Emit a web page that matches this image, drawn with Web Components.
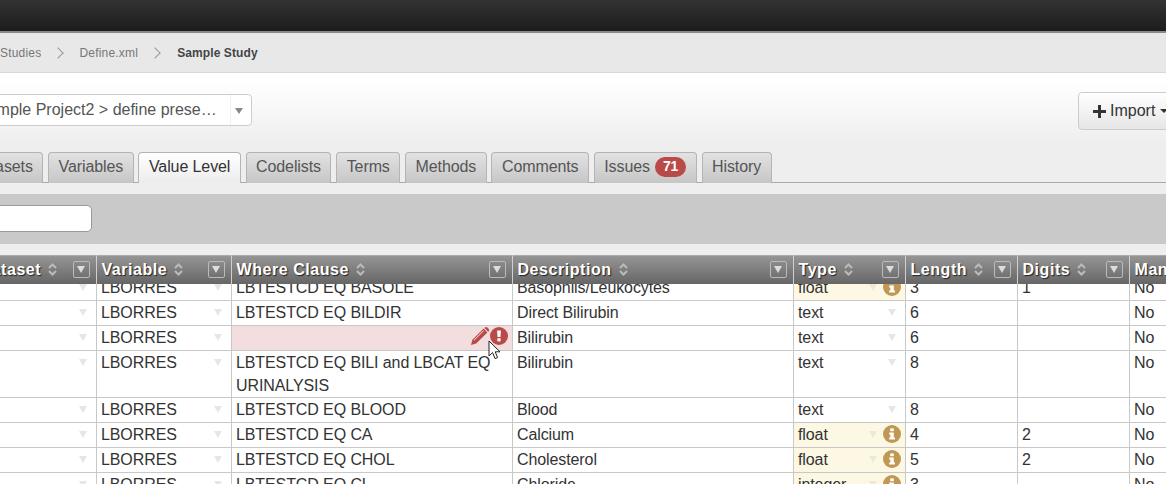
<!DOCTYPE html>
<html>
<head>
<meta charset="utf-8">
<title>Sample Study</title>
<style>
  html, body { margin: 0; height: 484px; overflow: hidden; background: #eee; }
  body { font-family: "Liberation Sans", Arial, sans-serif; font-size: 16px; color: #333; }
</style>
</head>
<body>
<app-topbar></app-topbar>
<app-breadcrumb>
  <span>Studies</span>
  <span>Define.xml</span>
  <span class="current">Sample Study</span>
</app-breadcrumb>
<study-panel>
  <project-select slot="left">Sample Project2 &gt; define prese…</project-select>
  <import-button slot="right"></import-button>
</study-panel>
<tab-bar>
  <tab-item>Datasets</tab-item>
  <tab-item>Variables</tab-item>
  <tab-item active>Value Level</tab-item>
  <tab-item>Codelists</tab-item>
  <tab-item>Terms</tab-item>
  <tab-item>Methods</tab-item>
  <tab-item>Comments</tab-item>
  <tab-item badge="71">Issues</tab-item>
  <tab-item>History</tab-item>
</tab-bar>
<filter-bar></filter-bar>
<value-grid></value-grid>

<script>
class AppTopbar extends HTMLElement {
  constructor() {
    super();
    this.attachShadow({ mode: 'open' }).innerHTML = `
      <style>
        :host {
          display: block;
          height: 31px;
          background: linear-gradient(#333, #1c1c1c);
          border-bottom: 2px solid #8a8a8a;
        }
      </style>`;
  }
}

class AppBreadcrumb extends HTMLElement {
  constructor() {
    super();
    this.attachShadow({ mode: 'open' }).innerHTML = `
      <style>
        :host {
          display: flex;
          align-items: center;
          height: 39px;
          background: #e8e8e8;
          border-bottom: 1px solid #d8d8d8;
          font-size: 12px;
          letter-spacing: .2px;
          color: #777;
        }
        ::slotted(span) { display: flex; align-items: center; }
        ::slotted(span:not(:last-child))::after {
          content: "";
          width: 7px;
          height: 7px;
          margin: 0 17px 0 13px;
          border-top: 1.5px solid #999;
          border-right: 1.5px solid #999;
          transform: rotate(45deg);
        }
        ::slotted(.current) { margin-left: 1px; font-weight: 700; color: #444; letter-spacing: .1px; }
      </style>
      <slot></slot>`;
  }
}

class StudyPanel extends HTMLElement {
  constructor() {
    super();
    this.attachShadow({ mode: 'open' }).innerHTML = `
      <style>
        :host {
          display: flex;
          justify-content: space-between;
          align-items: flex-start;
          height: 60px;
          padding-top: 19px;
          background: linear-gradient(#fff 10%, #eee 90%);
        }
      </style>
      <slot name="left"></slot>
      <slot name="right"></slot>`;
  }
}

class ProjectSelect extends HTMLElement {
  constructor() {
    super();
    this.attachShadow({ mode: 'open' }).innerHTML = `
      <style>
        :host {
          display: flex;
          align-items: center;
          box-sizing: border-box;
          width: 288px;
          height: 32px;
          margin: 2px 0 0 -36px;
          padding-left: 12px;
          background: #fff;
          border: 1px solid #ccc;
          border-radius: 4px;
          color: #555;
        }
        .label { flex: 1; white-space: nowrap; overflow: hidden; }
        .arrow {
          box-sizing: border-box;
          width: 21px;
          height: 100%;
          padding-right: 4px;
          display: flex;
          align-items: center;
          justify-content: center;
          border-left: 1px solid #f2f2f2;
        }
        .arrow::before {
          content: "";
          margin-top: 2px;
          border-top: 6px solid #888;
          border-left: 4px solid transparent;
          border-right: 4px solid transparent;
        }
      </style>
      <span class="label"><slot></slot></span>
      <span class="arrow"></span>`;
  }
}

class ImportButton extends HTMLElement {
  constructor() {
    super();
    this.attachShadow({ mode: 'open' }).innerHTML = `
      <style>
        :host {
          display: flex;
          align-items: center;
          gap: 4px;
          box-sizing: border-box;
          width: 100px;
          height: 38px;
          margin-right: -12px;
          padding-left: 14px;
          background: linear-gradient(#fff, #e6e6e6);
          border: 1px solid #ccc;
          border-radius: 4px;
          color: #333;
        }
        svg { display: block; }
        .caret {
          margin-left: 1px;
          border-top: 4px solid #333;
          border-left: 4px solid transparent;
          border-right: 4px solid transparent;
        }
      </style>
      <svg width="13" height="13" viewBox="0 0 13 13"><path fill="#333" d="M5 0h3v5h5v3H8v5H5V8H0V5h5z"/></svg>
      <span>Import</span>
      <span class="caret"></span>`;
  }
}

class TabBar extends HTMLElement {
  constructor() {
    super();
    this.attachShadow({ mode: 'open' }).innerHTML = `
      <style>
        :host {
          display: flex;
          gap: 4.75px;
          height: 30px;
          margin-left: -40px;
          border-bottom: 1px solid #aaa;
        }
      </style>
      <slot></slot>`;
  }
}

class TabItem extends HTMLElement {
  constructor() {
    super();
    const badge = this.getAttribute('badge');
    this.attachShadow({ mode: 'open' }).innerHTML = `
      <style>
        :host {
          display: flex;
          align-items: center;
          gap: 5px;
          box-sizing: border-box;
          height: 31px;
          padding: 0 9.5px 2px;
          background: linear-gradient(#e2e2e2, #c6c6c6);
          border: 1px solid #b4b4b4;
          border-bottom: 0;
          border-radius: 4px 4px 0 0;
          letter-spacing: -.1px;
          color: #555;
        }
        :host([active]) {
          background: linear-gradient(#fff, #ececec);
          color: #333;
          z-index: 1;
        }
        .badge {
          padding: 1px 8px 2px;
          border-radius: 10px;
          background: #b94a48;
          color: #fff;
          font-size: 14px;
          font-weight: 700;
          line-height: 17px;
        }
      </style>
      <slot></slot>${badge ? `<span class="badge">${badge}</span>` : ''}`;
  }
}

class FilterBar extends HTMLElement {
  constructor() {
    super();
    this.attachShadow({ mode: 'open' }).innerHTML = `
      <style>
        :host {
          display: block;
          height: 50px;
          margin-top: 11px;
          padding-top: 11px;
          box-sizing: border-box;
          background: #c9c9c9;
        }
        .search {
          box-sizing: border-box;
          width: 140px;
          height: 27px;
          margin-left: -48px;
          background: #fff;
          border: 1px solid #999;
          border-radius: 5px;
        }
      </style>
      <div class="search"></div>`;
  }
}

const COLUMNS = [
  { title: 'Dataset', width: 122, caret: true },
  { title: 'Variable', width: 135, caret: true },
  { title: 'Where Clause', width: 281 },
  { title: 'Description', width: 281 },
  { title: 'Type', width: 112, caret: true },
  { title: 'Length', width: 112 },
  { title: 'Digits', width: 112 },
  { title: 'Mandatory', width: 112 },
];

const ROWS = [
  ['LB', 'LBORRES', 'LBTESTCD EQ BASOLE', 'Basophils/Leukocytes', 'float', '3', '1', 'No'],
  ['LB', 'LBORRES', 'LBTESTCD EQ BILDIR', 'Direct Bilirubin', 'text', '6', '', 'No'],
  ['LB', 'LBORRES', '', 'Bilirubin', 'text', '6', '', 'No'],
  ['LB', 'LBORRES', 'LBTESTCD EQ BILI and LBCAT EQ URINALYSIS', 'Bilirubin', 'text', '8', '', 'No'],
  ['LB', 'LBORRES', 'LBTESTCD EQ BLOOD', 'Blood', 'text', '8', '', 'No'],
  ['LB', 'LBORRES', 'LBTESTCD EQ CA', 'Calcium', 'float', '4', '2', 'No'],
  ['LB', 'LBORRES', 'LBTESTCD EQ CHOL', 'Cholesterol', 'float', '5', '2', 'No'],
  ['LB', 'LBORRES', 'LBTESTCD EQ CL', 'Chloride', 'integer', '3', '', 'No'],
];

const INFO_ICON = `<svg class="icon info" width="18" height="18" viewBox="0 0 18 18">
  <circle cx="9" cy="9" r="9" fill="#c09853"/>
  <rect x="7.2" y="3.4" width="3.6" height="2.8" fill="#fff"/>
  <path fill="#fff" d="M6.2 7.4h4.6v5.2h1.2v2H6.2v-2h1.2V9.4H6.2z"/>
</svg>`;

const ERROR_ICON = `<svg class="icon error" width="18" height="18" viewBox="0 0 18 18">
  <circle cx="9" cy="9" r="9" fill="#b94a48"/>
  <path fill="#fff" d="M7 3.4h4l-.6 6.6H7.6z"/>
  <rect x="7.4" y="11.2" width="3.2" height="3.2" fill="#fff"/>
</svg>`;

const PENCIL_ICON = `<svg class="icon pencil" width="19" height="18" viewBox="0 0 19 18">
  <path fill="#b94a48" d="M0 18l1.4-5.2L12.6 1.6l3.8 3.8L5.2 16.6z"/>
  <path fill="#b94a48" d="M13.8.6c.8-.8 1.8-.8 2.6 0l1.2 1.2c.8.8.8 1.8 0 2.6l-.4.4-3.8-3.8z"/>
  <path fill="#f2dede" d="M2.6 13l9.6-9.6.6.6-9.6 9.6z"/>
</svg>`;

class ValueGrid extends HTMLElement {
  constructor() {
    super();
    const cols = COLUMNS.map(c => `<col style="width:${c.width}px">`).join('');
    const head = COLUMNS.map(c => `
      <th>
        <span class="title">${c.title}</span>
        <svg class="sort" width="9" height="13" viewBox="0 0 9 13"><path fill="none" stroke="#bbb" stroke-width="2" d="M1 5l3.5-3.5L8 5M1 8l3.5 3.5L8 8"/></svg>
        <span class="filter"></span>
      </th>`).join('');
    const body = ROWS.map(row => `<tr${row[2].includes('URINALYSIS') ? ' class="tall"' : ''}>${row.map((text, i) => this.cell(text, i)).join('')}</tr>`).join('');

    this.attachShadow({ mode: 'open' }).innerHTML = `
      <style>
        :host {
          display: block;
          position: relative;
          margin: 11px 0 0 -25px;
          height: 229px;
          overflow: hidden;
          background: #fff;
        }
        table {
          table-layout: fixed;
          width: 1267px;
          border-collapse: separate;
          border-spacing: 0;
        }
        .head { position: relative; z-index: 1; }
        .scroll { margin-top: -8px; }
        th {
          position: relative;
          height: 29px;
          padding: 0 0 0 4.5px;
          box-sizing: border-box;
          text-align: left;
          white-space: nowrap;
          background: linear-gradient(#959595, #666);
          border-top: 1px solid #aaa;
          border-right: 1px solid #d0d0d0;
          color: #fff;
          font-weight: 700;
          letter-spacing: .55px;
          text-shadow: 1px 1px 1px #222;
        }
        th .sort { vertical-align: -1px; margin-left: 2px; }
        .filter {
          position: absolute;
          right: 6px;
          top: 5px;
          box-sizing: border-box;
          width: 17px;
          height: 17px;
          border: 1px solid #bbb;
          border-radius: 2px;
        }
        .filter::after {
          content: "";
          position: absolute;
          left: 3px;
          top: 4px;
          border-top: 7px solid #ddd;
          border-left: 4.5px solid transparent;
          border-right: 4.5px solid transparent;
        }
        td {
          position: relative;
          box-sizing: border-box;
          height: 25px;
          padding: 0 4px;
          vertical-align: top;
          line-height: 23px;
          letter-spacing: -.1px;
          border-right: 1px solid #c8c8c8;
          border-bottom: 1px solid #c8c8c8;
        }
        tr.tall td { height: 47px; }
        td.warn { background: #fcf8e3; }
        td.bad { background: #f2dede; }
        .caret {
          position: absolute;
          right: 9px;
          top: 8px;
          border-top: 7px solid #e6e6e6;
          border-left: 4px solid transparent;
          border-right: 4px solid transparent;
        }
        td.warn .caret { right: 28px; border-top-color: #ece9d8; }
        .icon { position: absolute; }
        .info { right: 4px; top: 2px; }
        .error { right: 4px; top: 1px; }
        .pencil { right: 22px; top: 1px; }
        .cursor { position: absolute; left: 513px; top: 85px; z-index: 2; }
      </style>
      <table class="head"><colgroup>${cols}</colgroup><tr>${head}</tr></table>
      <div class="scroll"><table><colgroup>${cols}</colgroup>${body}</table></div>
      <svg class="cursor" width="14" height="21" viewBox="0 0 14 21">
        <path fill="#fff" stroke="#222" d="M1 1v15l3.6-3.4 2.4 6 2.6-1-2.4-5.8H12z"/>
      </svg>`;
  }

  cell(text, index) {
    const { caret } = COLUMNS[index];
    const isFloat = text === 'float' || text === 'integer';
    const classes = [];
    let extra = caret ? '<span class="caret"></span>' : '';
    if (index === 4 && isFloat) {
      classes.push('warn');
      extra += INFO_ICON;
    }
    if (index === 2 && text === '') {
      classes.push('bad');
      extra += PENCIL_ICON + ERROR_ICON;
    }
    return `<td class="${classes.join(' ')}">${text}${extra}</td>`;
  }
}

customElements.define('app-topbar', AppTopbar);
customElements.define('app-breadcrumb', AppBreadcrumb);
customElements.define('study-panel', StudyPanel);
customElements.define('project-select', ProjectSelect);
customElements.define('import-button', ImportButton);
customElements.define('tab-bar', TabBar);
customElements.define('tab-item', TabItem);
customElements.define('filter-bar', FilterBar);
customElements.define('value-grid', ValueGrid);
</script>
</body>
</html>
